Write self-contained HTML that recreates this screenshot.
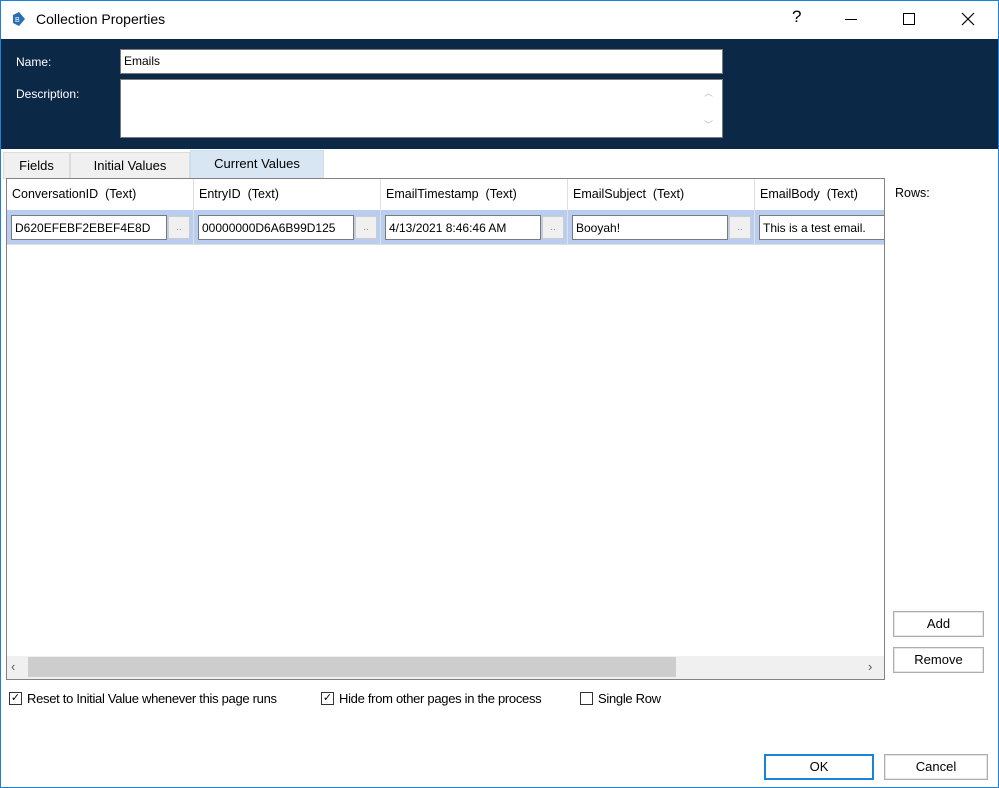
<!DOCTYPE html>
<html><head><style>
*{box-sizing:border-box;margin:0;padding:0}
body{width:999px;height:788px;background:#fff;font-family:"Liberation Sans",sans-serif;font-size:12px;color:#000;position:relative;overflow:hidden}
.a{position:absolute}
.win{left:0;top:0;width:999px;height:788px;border:1px solid #1883d7}
.hdr{left:1px;top:39px;width:997px;height:110px;background:#0c2847}
.lbl{color:#fff;font-size:12px}
.inp{background:#fff;border:1px solid #7a7a7a;padding:4px 3px;font-size:12px}
.tab{top:152px;height:27px;background:#f0f0f0;border:1px solid #dcdcdc;text-align:center;line-height:25px;font-size:13px}
.cell{top:215px;height:25px;border:1px solid #7a7a7a;background:#fff;padding:5px 3px;font-size:12px;white-space:nowrap;overflow:hidden}
.dot{top:216px;width:22px;height:23px;background:#f0f0f0;border:1px solid #ccc;color:#888;text-align:center;line-height:22px;font-size:10px}
.ch{top:187px;font-size:12.5px}
.btn{background:#fff;border:1px solid #adadad;text-align:center;font-size:13px;box-shadow:inset 0 0 0 1px #e5e5e5}
.cb{width:13px;height:13px;border:1px solid #333;top:692px;font-size:11px;line-height:11px;text-align:center}
.ct{top:691px;font-size:13px;letter-spacing:-0.3px}
</style></head><body>
<div class="a win"></div>
<svg class="a" style="left:11px;top:11px" width="16" height="16"><path d="M2 4 L8 1 L14 8 L8 15 L2 12Z" fill="#2a6fb5"/><text x="4" y="11" font-size="7" fill="#fff" font-family="Liberation Sans">B</text></svg>
<div class="a" style="left:36px;top:11px;font-size:14px">Collection Properties</div>
<div class="a" style="left:792px;top:7px;font-size:17px">?</div>
<div class="a" style="left:845px;top:19px;width:12px;height:1px;background:#000"></div>
<div class="a" style="left:903px;top:13px;width:12px;height:12px;border:1px solid #000"></div>
<svg class="a" style="left:961px;top:12px" width="14" height="14"><path d="M1 1L13 13M13 1L1 13" stroke="#000" stroke-width="1.2"/></svg>
<div class="a hdr"></div>
<div class="a lbl" style="left:16px;top:55px">Name:</div>
<div class="a lbl" style="left:16px;top:87px">Description:</div>
<div class="a inp" style="left:120px;top:49px;width:603px;height:25px">Emails</div>
<div class="a inp" style="left:120px;top:79px;width:603px;height:59px"></div>
<div class="a" style="left:704px;top:86px;color:#bbb;font-size:9px">︿</div>
<div class="a" style="left:704px;top:118px;color:#bbb;font-size:9px">﹀</div>
<div class="a tab" style="left:3px;width:67px">Fields</div>
<div class="a tab" style="left:70px;width:120px">Initial Values</div>
<div class="a tab" style="left:190px;top:150px;width:134px;height:29px;background:#d8e6f4;border-color:#cde">Current Values</div>
<div class="a" style="left:6px;top:178px;width:879px;height:502px;border:1px solid #828282;background:#fff"></div>
<div class="a" style="left:7px;top:210px;width:877px;height:34px;background:#b8cdef"></div>
<div class="a" style="left:193px;top:179px;width:1px;height:65px;background:#e0e0e0"></div>
<div class="a" style="left:380px;top:179px;width:1px;height:65px;background:#e0e0e0"></div>
<div class="a" style="left:567px;top:179px;width:1px;height:65px;background:#e0e0e0"></div>
<div class="a" style="left:754px;top:179px;width:1px;height:65px;background:#e0e0e0"></div>
<div class="a" style="left:7px;top:244px;width:877px;height:1px;background:#ddd"></div>
<div class="a ch" style="left:12px">ConversationID&nbsp; (Text)</div>
<div class="a ch" style="left:199px">EntryID&nbsp; (Text)</div>
<div class="a ch" style="left:386px">EmailTimestamp&nbsp; (Text)</div>
<div class="a ch" style="left:573px">EmailSubject&nbsp; (Text)</div>
<div class="a ch" style="left:760px">EmailBody&nbsp; (Text)</div>
<div class="a cell" style="left:11px;width:156px">D620EFEBF2EBEF4E8D</div><div class="a dot" style="left:168px">..</div>
<div class="a cell" style="left:198px;width:156px">00000000D6A6B99D125</div><div class="a dot" style="left:355px">..</div>
<div class="a cell" style="left:385px;width:156px">4/13/2021 8:46:46 AM</div><div class="a dot" style="left:542px">..</div>
<div class="a cell" style="left:572px;width:156px">Booyah!</div><div class="a dot" style="left:729px">..</div>
<div class="a cell" style="left:759px;width:125px;border-right:none">This is a test email.</div>
<div class="a" style="left:7px;top:656px;width:877px;height:23px;background:#f0f0f0"></div>
<div class="a" style="left:28px;top:657px;width:648px;height:20px;background:#cdcdcd"></div>
<div class="a" style="left:11px;top:659px;color:#555;font-size:13px">‹</div>
<div class="a" style="left:868px;top:659px;color:#555;font-size:13px">›</div>
<div class="a" style="left:895px;top:186px;font-size:12.5px">Rows:</div>
<div class="a btn" style="left:893px;top:611px;width:91px;height:26px;line-height:24px">Add</div>
<div class="a btn" style="left:893px;top:647px;width:91px;height:26px;line-height:24px">Remove</div>
<div class="a cb" style="left:9px">✓</div><div class="a ct" style="left:27px">Reset to Initial Value whenever this page runs</div>
<div class="a cb" style="left:321px">✓</div><div class="a ct" style="left:339px">Hide from other pages in the process</div>
<div class="a cb" style="left:580px"></div><div class="a ct" style="left:598px">Single Row</div>
<div class="a btn" style="left:764px;top:754px;width:110px;height:26px;line-height:22px;border:2px solid #1883d7;box-shadow:none">OK</div>
<div class="a btn" style="left:884px;top:754px;width:104px;height:26px;line-height:24px">Cancel</div>
</body></html>
